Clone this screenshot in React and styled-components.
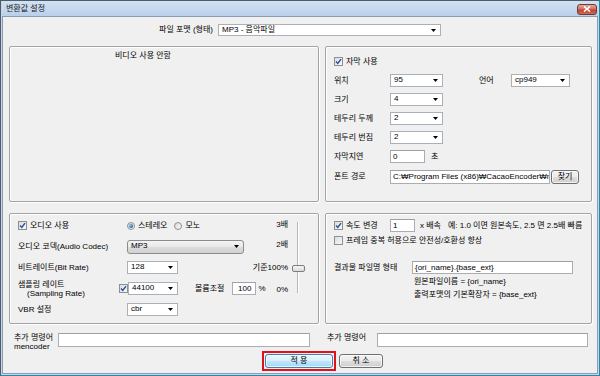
import React from "react";
import styled, { createGlobalStyle } from "styled-components";

const GlobalStyle = createGlobalStyle`
  * { box-sizing: border-box; }
  html, body { margin: 0; padding: 0; background: #f0f0f0; }
  body {
    font-family: "Liberation Sans", "Noto Sans CJK KR", sans-serif;
    font-size: 8px;
    line-height: 10px;
    color: #000;
  }
`;

const Window = styled.div`
  width: 600px;
  height: 376px;
  display: flex;
  flex-direction: column;
  background: #c3d7ed;
  border: 1px solid #4f5b68;
  border-right-color: #2a86aa;
  border-bottom-color: #2a86aa;
  padding: 0 1px 1px 1px;
`;

const TitleBar = styled.div`
  height: 15px;
  flex-shrink: 0;
  display: flex;
  align-items: center;
  justify-content: space-between;
  padding: 0 1px 0 4px;
  background: linear-gradient(#d2e2f4, #b9d0ea);
`;

const TitleText = styled.span`
  font-size: 8px;
  color: #1a1a1a;
`;

const CloseButton = styled.div`
  width: 20px;
  height: 11px;
  margin-top: 1px;
  border: 1px solid #6e3b36;
  border-radius: 3px;
  display: flex;
  align-items: center;
  justify-content: center;
  background: linear-gradient(#e8a99b, #d27060 45%, #c2402f 55%, #d06a55);
`;

const Body = styled.div`
  flex: 1;
  display: flex;
  flex-direction: column;
  background: #f0f0f0;
  border: 1px solid #8b9db2;
  padding: 7px 5px 0 6px;
`;

const FormatRow = styled.div`
  height: 12px;
  display: flex;
  align-items: center;
`;

const FormatLabel = styled.span`
  width: 60px;
  margin-left: 144px;
  margin-right: 5px;
  text-align: right;
`;

const PanelGrid = styled.div`
  margin-top: 10px;
  display: grid;
  grid-template-columns: 310px 267px;
  grid-template-rows: 156px 111px;
  column-gap: 6px;
  row-gap: 11px;
`;

const Group = styled.div`
  border: 1px solid #a4a4a4;
  border-radius: 2px;
  box-shadow: inset 1px 1px 0 #fff, 1px 1px 0 #fff;
  padding: ${(p) => p.$pad || "0"};
  display: flex;
  flex-direction: ${(p) => p.$dir || "column"};
  align-items: flex-start;
`;

const Notice = styled.div`
  margin: 4px 0 0 105px;
`;

const Row = styled.div`
  height: ${(p) => p.$h || 13}px;
  margin-top: ${(p) => p.$mt || 0}px;
  display: flex;
  align-items: center;
  flex-shrink: 0;
  white-space: nowrap;
`;

const FieldLabel = styled.span`
  width: ${(p) => p.$w}px;
  margin-left: ${(p) => p.$ml || 0}px;
  flex-shrink: 0;
  white-space: nowrap;
`;

const Text = styled.span`
  margin-left: ${(p) => p.$ml || 0}px;
  white-space: nowrap;
`;

const CheckLabel = styled.label`
  display: flex;
  align-items: center;
  gap: 3px;
  width: ${(p) => (p.$w ? `${p.$w}px` : "auto")};
  flex-shrink: 0;
  white-space: nowrap;
`;

const CheckBox = styled.span`
  width: 9px;
  height: 9px;
  flex-shrink: 0;
  border: 1px solid #8e8f8f;
  background: linear-gradient(135deg, #d9dde3, #f7f8fa);
  display: inline-flex;
  align-items: center;
  justify-content: center;
`;

const RadioCircle = styled.span`
  width: 8px;
  height: 8px;
  flex-shrink: 0;
  border-radius: 50%;
  border: 1px solid #8e8f8f;
  background: linear-gradient(135deg, #d7d9dc, #fafafa);
  display: inline-flex;
  align-items: center;
  justify-content: center;
  &::after {
    content: "";
    display: ${(p) => (p.$on ? "block" : "none")};
    width: 4px;
    height: 4px;
    border-radius: 50%;
    background: radial-gradient(circle at 35% 35%, #8fd0f0, #1a5d9c 70%);
  }
`;

const RadioOption = styled.span`
  display: flex;
  align-items: center;
  gap: 3px;
  margin-right: ${(p) => p.$mr || 0}px;
`;

const ComboBox = styled.div`
  width: ${(p) => p.$w}px;
  height: ${(p) => p.$h || 13}px;
  margin-left: ${(p) => p.$ml || 0}px;
  flex-shrink: 0;
  display: flex;
  align-items: flex-start;
  justify-content: space-between;
  padding: 0 4px 0 3px;
  line-height: 10px;
  background: ${(p) =>
    p.$button
      ? "linear-gradient(#f4f4f4, #e9e9e9 48%, #dcdcdc 52%, #d2d2d2)"
      : "#fff"};
  border: 1px solid ${(p) => (p.$button ? "#8c8c8c" : "#a9b0b9")};
  border-radius: ${(p) => (p.$button ? "3px" : "0")};
  & > svg {
    align-self: center;
  }
`;

const TextInput = styled.div`
  width: ${(p) => p.$w}px;
  height: ${(p) => p.$h || 13}px;
  margin-left: ${(p) => p.$ml || 0}px;
  flex-shrink: 0;
  background: #fff;
  border: 1px solid #abadb3;
  border-top-color: #9da2aa;
  padding: 0 ${(p) => (p.$right ? 4 : 2)}px;
  text-align: ${(p) => (p.$right ? "right" : "left")};
  line-height: 11px;
  overflow: hidden;
  white-space: nowrap;
  text-overflow: clip;
`;

const PushButton = styled.div`
  width: ${(p) => p.$w}px;
  height: ${(p) => p.$h || 14}px;
  margin-left: ${(p) => p.$ml || 0}px;
  flex-shrink: 0;
  display: flex;
  align-items: center;
  justify-content: center;
  white-space: pre;
  border: 1px solid ${(p) => (p.$default ? "#3c7fb1" : "#707070")};
  border-radius: 3px;
  background: ${(p) =>
    p.$default
      ? "linear-gradient(#eaf6fd, #d9f0fc 48%, #bee6fd 52%, #a7d9f5)"
      : "linear-gradient(#f2f2f2, #ebebeb 48%, #dddddd 52%, #cfcfcf)"};
  box-shadow: inset 0 0 0 1px rgba(255, 255, 255, 0.7);
`;

const FocusFrame = styled.div`
  border: 2px solid #e3101b;
  padding: 1px;
  display: flex;
`;

const SubPanelColumn = styled.div`
  display: flex;
  flex-direction: column;
  gap: ${(p) => p.$gap || 0}px;
`;

const AudioRows = styled.div`
  width: 270px;
  display: flex;
  flex-direction: column;
`;

const AudioRow = styled.div`
  height: 21px;
  display: flex;
  align-items: center;
  white-space: nowrap;
`;

const VolumeMark = styled.span`
  margin-left: auto;
  align-self: ${(p) => p.$align || "center"};
  margin-top: ${(p) => p.$mt || 0}px;
`;

const TwoLineLabel = styled.div`
  width: ${(p) => p.$w}px;
  flex-shrink: 0;
  line-height: 9px;
  display: flex;
  flex-direction: column;
`;

const Indent = styled.span`
  padding-left: ${(p) => p.$pl}px;
`;

const SliderTrack = styled.div`
  position: relative;
  width: 15px;
  height: 71px;
  margin: 7px 0 0 3px;
  flex-shrink: 0;
  &::before {
    content: "";
    position: absolute;
    left: 6px;
    top: 0;
    bottom: 0;
    width: 1px;
    background: #b6b6b6;
    box-shadow: 1px 0 0 #fff;
  }
`;

const SliderThumb = styled.div`
  position: absolute;
  left: 1px;
  top: 43px;
  width: 13px;
  height: 7px;
  border: 1px solid #7d7d7d;
  border-radius: 2px;
  background: linear-gradient(#f6f6f6, #dadada);
`;

const CommandRow = styled.div`
  margin-top: 9px;
  height: 14px;
  display: flex;
  align-items: flex-start;
  padding-left: 5px;
`;

const ButtonRow = styled.div`
  margin-top: 4px;
  display: flex;
  align-items: center;
  padding-left: 253px;
`;

const Arrow = () => (
  <svg width="5" height="3" viewBox="0 0 5 3">
    <path d="M0 0H5L2.5 3Z" fill="#000" />
  </svg>
);

const Check = ({ on }) => (
  <CheckBox>
    {on && (
      <svg width="7" height="7" viewBox="0 0 7 7">
        <path
          d="M1 3.6L2.8 5.4L6 1.2"
          stroke="#2a4f96"
          strokeWidth="1.4"
          fill="none"
        />
      </svg>
    )}
  </CheckBox>
);

const Combo = ({ w, h, ml, button, children }) => (
  <ComboBox $w={w} $h={h} $ml={ml} $button={button}>
    <span>{children}</span>
    <Arrow />
  </ComboBox>
);

export default function App() {
  return (
    <>
      <GlobalStyle />
      <Window>
        <TitleBar>
          <TitleText>변환값 설정</TitleText>
          <CloseButton>
            <svg width="8" height="6" viewBox="0 0 8 6">
              <path
                d="M1 0.5L7 5.5M7 0.5L1 5.5"
                stroke="#fff"
                strokeWidth="1.6"
              />
            </svg>
          </CloseButton>
        </TitleBar>
        <Body>
          <FormatRow>
            <FormatLabel>파일 포맷 (형태)</FormatLabel>
            <Combo w={223} h={12}>
              MP3 - 음악파일
            </Combo>
          </FormatRow>

          <PanelGrid>
            <Group>
              <Notice>비디오 사용 안함</Notice>
            </Group>

            <Group $pad="8px 0 0 8px">
              <SubPanelColumn $gap={6}>
                <Row>
                  <CheckLabel>
                    <Check on />
                    자막 사용
                  </CheckLabel>
                </Row>
                <Row>
                  <FieldLabel $w={56}>위치</FieldLabel>
                  <Combo w={53}>95</Combo>
                  <FieldLabel $w={32} $ml={36}>
                    언어
                  </FieldLabel>
                  <Combo w={59}>cp949</Combo>
                </Row>
                <Row>
                  <FieldLabel $w={56}>크기</FieldLabel>
                  <Combo w={53}>4</Combo>
                </Row>
                <Row>
                  <FieldLabel $w={56}>테두리 두께</FieldLabel>
                  <Combo w={53}>2</Combo>
                </Row>
                <Row>
                  <FieldLabel $w={56}>테두리 번짐</FieldLabel>
                  <Combo w={53}>2</Combo>
                </Row>
                <Row>
                  <FieldLabel $w={56}>자막지연</FieldLabel>
                  <TextInput $w={35}>0</TextInput>
                  <Text $ml={6}>초</Text>
                </Row>
                <Row $h={14} $mt={1}>
                  <FieldLabel $w={56}>폰트 경로</FieldLabel>
                  <TextInput $w={160} $h={14}>
                    C:₩Program Files (x86)₩CacaoEncoder₩m
                  </TextInput>
                  <PushButton $w={28} $ml={1}>
                    찾기
                  </PushButton>
                </Row>
              </SubPanelColumn>
            </Group>

            <Group $dir="row" $pad="1px 0 0 8px">
              <AudioRows>
                <AudioRow>
                  <CheckLabel $w={109}>
                    <Check on />
                    오디오 사용
                  </CheckLabel>
                  <RadioOption $mr={7}>
                    <RadioCircle $on />
                    스테레오
                  </RadioOption>
                  <RadioOption>
                    <RadioCircle />
                    모노
                  </RadioOption>
                  <VolumeMark $align="flex-start" $mt={5}>
                    3배
                  </VolumeMark>
                </AudioRow>
                <AudioRow>
                  <FieldLabel $w={109}>오디오 코덱(Audio Codec)</FieldLabel>
                  <Combo w={117} h={14} button>
                    MP3
                  </Combo>
                  <VolumeMark $align="flex-start" $mt={4}>
                    2배
                  </VolumeMark>
                </AudioRow>
                <AudioRow>
                  <FieldLabel $w={109}>비트레이트(Bit Rate)</FieldLabel>
                  <Combo w={51}>128</Combo>
                  <VolumeMark>기준100%</VolumeMark>
                </AudioRow>
                <AudioRow>
                  <TwoLineLabel $w={101}>
                    <span>샘플링 레이트</span>
                    <Indent $pl={9}>(Sampling Rate)</Indent>
                  </TwoLineLabel>
                  <Check on />
                  <Combo w={50}>44100</Combo>
                  <Text $ml={17}>볼륨조절</Text>
                  <TextInput $w={24} $ml={8} $right>
                    100
                  </TextInput>
                  <Text $ml={2}>%</Text>
                  <VolumeMark $align="flex-start" $mt={7}>
                    0%
                  </VolumeMark>
                </AudioRow>
                <AudioRow>
                  <FieldLabel $w={109}>VBR 설정</FieldLabel>
                  <Combo w={51}>cbr</Combo>
                </AudioRow>
              </AudioRows>
              <SliderTrack>
                <SliderThumb />
              </SliderTrack>
            </Group>

            <Group $pad="5px 0 0 8px">
              <Row>
                <CheckLabel $w={56}>
                  <Check on />
                  속도 변경
                </CheckLabel>
                <TextInput $w={25}>1</TextInput>
                <Text $ml={5}>x 배속</Text>
                <Text $ml={7}>예: 1.0 이면 원본속도, 2.5 면 2.5배 빠름</Text>
              </Row>
              <Row $mt={2}>
                <CheckLabel>
                  <Check />
                  프레임 중복 허용으로 안전성/호환성 향상
                </CheckLabel>
              </Row>
              <Row $mt={14}>
                <FieldLabel $w={78}>결과물 파일명 형태</FieldLabel>
                <TextInput $w={161}>{"{ori_name}.{base_ext}"}</TextInput>
              </Row>
              <Row $h={11} $mt={2}>
                <Text $ml={80}>{"원본파일이름 = {ori_name}"}</Text>
              </Row>
              <Row $h={11} $mt={2}>
                <Text $ml={80}>{"출력포맷의 기본확장자 = {base_ext}"}</Text>
              </Row>
            </Group>
          </PanelGrid>

          <CommandRow>
            <TwoLineLabel $w={44}>
              <span>추가 명령어</span>
              <span>mencoder</span>
            </TwoLineLabel>
            <TextInput $w={252} $h={14} />
            <FieldLabel $w={50} $ml={17}>
              추가 명령어
            </FieldLabel>
            <TextInput $w={211} $h={14} />
          </CommandRow>

          <ButtonRow>
            <FocusFrame>
              <PushButton $w={68} $default>
                적 용
              </PushButton>
            </FocusFrame>
            <PushButton $w={44} $ml={3}>
              취 소
            </PushButton>
          </ButtonRow>
        </Body>
      </Window>
    </>
  );
}
